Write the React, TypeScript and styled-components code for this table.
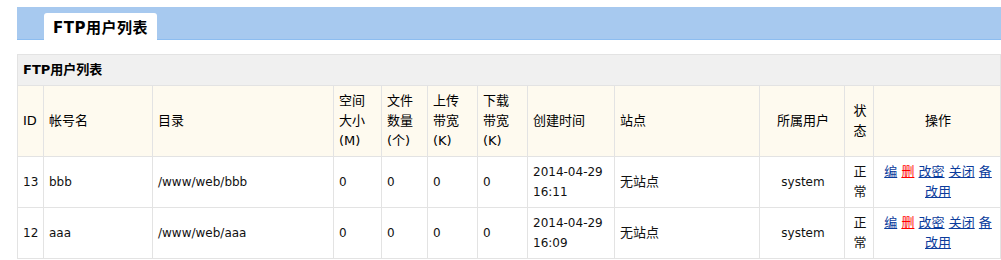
import React from "react";
import styled, { createGlobalStyle } from "styled-components";

const Global = createGlobalStyle`
  body {
    margin: 0;
    background: #fff;
    color: #000;
    font-family: "DejaVu Sans", "Noto Sans CJK SC", sans-serif;
  }
`;

const Page = styled.div`
  padding: 7px 0 0 17px;
`;

const TabBar = styled.div`
  display: flex;
  align-items: flex-end;
  height: 32px;
  padding-left: 27px;
  background: #a7c9ef;
  border-bottom: 1px solid #8dbdf0;
`;

const Tab = styled.div`
  display: flex;
  align-items: center;
  justify-content: center;
  width: 113px;
  height: 27px;
  margin-bottom: -1px;
  background: #fff;
  border-radius: 3px 3px 0 0;
  font-size: 15px;
  font-weight: bold;
  letter-spacing: 0.5px;
`;

const Table = styled.table`
  margin-top: 14px;
  width: 984px;
  border-collapse: collapse;
  table-layout: fixed;
  border: 1px solid #e3e3e3;
`;

const Col = styled.col<{ $w: number }>`
  width: ${(p) => p.$w}px;
`;

const TitleCell = styled.th`
  background: #f0f0f0;
  border: 1px solid #e3e3e3;
  padding: 5px;
  line-height: 20px;
  font-size: 13px;
  font-weight: bold;
  text-align: left;
`;

const Th = styled.th<{ $center?: boolean }>`
  background: #fefaef;
  border: 1px solid #e3e3e3;
  padding: 5px 3px 5px 5px;
  line-height: 20px;
  font-size: 13px;
  font-weight: normal;
  text-align: ${(p) => (p.$center ? "center" : "left")};
  vertical-align: middle;
`;

const Td = styled.td<{ $center?: boolean }>`
  border: 1px solid #e3e3e3;
  padding: 5px 3px 5px 5px;
  line-height: 20px;
  font-size: 12px;
  color: #111;
  text-align: ${(p) => (p.$center ? "center" : "left")};
  vertical-align: middle;
`;

const Cjk = styled.span`
  font-size: 13px;
`;

const Actions = styled.div`
  font-size: 13px;
  text-align: center;
`;

const Link = styled.a<{ $danger?: boolean }>`
  color: ${(p) => (p.$danger ? "#ff0000" : "#0b3c9c")};
  text-decoration: underline;
  cursor: pointer;
`;

const widths = [26, 109, 181, 48, 46, 50, 50, 87, 145, 85, 29, 127];

const rows = [
  { id: 13, name: "bbb", dir: "/www/web/bbb", date: "2014-04-29", time: "16:11" },
  { id: 12, name: "aaa", dir: "/www/web/aaa", date: "2014-04-29", time: "16:09" },
];

export default function App() {
  return (
    <Page>
      <Global />
      <TabBar>
        <Tab>FTP用户列表</Tab>
      </TabBar>
      <Table>
        <colgroup>
          {widths.map((w, i) => (
            <Col key={i} $w={w} />
          ))}
        </colgroup>
        <thead>
          <tr>
            <TitleCell colSpan={12}>FTP用户列表</TitleCell>
          </tr>
          <tr>
            <Th>ID</Th>
            <Th>帐号名</Th>
            <Th>目录</Th>
            <Th>
              空间
              <br />
              大小
              <br />
              (M)
            </Th>
            <Th>
              文件
              <br />
              数量
              <br />
              (个)
            </Th>
            <Th>
              上传
              <br />
              带宽
              <br />
              (K)
            </Th>
            <Th>
              下载
              <br />
              带宽
              <br />
              (K)
            </Th>
            <Th>创建时间</Th>
            <Th>站点</Th>
            <Th $center>所属用户</Th>
            <Th $center>
              状
              <br />态
            </Th>
            <Th $center>操作</Th>
          </tr>
        </thead>
        <tbody>
          {rows.map((r) => (
            <tr key={r.id}>
              <Td>{r.id}</Td>
              <Td>{r.name}</Td>
              <Td>{r.dir}</Td>
              <Td>0</Td>
              <Td>0</Td>
              <Td>0</Td>
              <Td>0</Td>
              <Td>
                {r.date}
                <br />
                {r.time}
              </Td>
              <Td>
                <Cjk>无站点</Cjk>
              </Td>
              <Td $center>system</Td>
              <Td $center>
                <Cjk>
                  正<br />常
                </Cjk>
              </Td>
              <Td $center>
                <Actions>
                  <Link>编</Link> <Link $danger>删</Link> <Link>改密</Link>{" "}
                  <Link>关闭</Link> <Link>备</Link>
                  <br />
                  <Link>改用</Link>
                </Actions>
              </Td>
            </tr>
          ))}
        </tbody>
      </Table>
    </Page>
  );
}
